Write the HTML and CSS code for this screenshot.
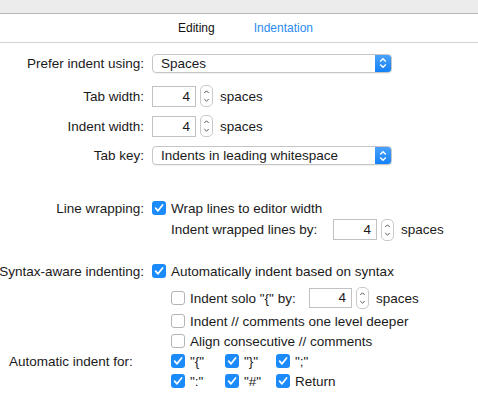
FILE: index.html
```html
<!DOCTYPE html>
<html>
<head>
<meta charset="utf-8">
<link rel="stylesheet" href="styles.css">
</head>
<body>
<div class="titlebar"></div>
<div class="tabs">
  <span class="tab">Editing</span>
  <span class="tab active">Indentation</span>
</div>
<div class="form">
  <div class="row r-prefer">
    <div class="label">Prefer indent using:</div>
    <div class="popup w240"><span class="popup-text">Spaces</span><span class="popup-arrow"><svg width="8" height="12" viewBox="0 0 8 12"><path d="M1.2 4.6 L4 1.8 L6.8 4.6 M1.2 7.4 L4 10.2 L6.8 7.4" fill="none" stroke="#fff" stroke-width="1.4"/></svg></span></div>
  </div>
  <div class="row r-tabw">
    <div class="label">Tab width:</div>
    <div class="num">4</div>
    <div class="stepper"><svg width="13" height="22" viewBox="0 0 13 22"><path d="M4.3 8 L6.5 5.8 L8.7 8 M4.3 14 L6.5 16.2 L8.7 14" fill="none" stroke="#555" stroke-width="1"/></svg></div>
    <span class="unit">spaces</span>
  </div>
  <div class="row r-indw">
    <div class="label">Indent width:</div>
    <div class="num">4</div>
    <div class="stepper"><svg width="13" height="22" viewBox="0 0 13 22"><path d="M4.3 8 L6.5 5.8 L8.7 8 M4.3 14 L6.5 16.2 L8.7 14" fill="none" stroke="#555" stroke-width="1"/></svg></div>
    <span class="unit">spaces</span>
  </div>
  <div class="row r-tabkey">
    <div class="label">Tab key:</div>
    <div class="popup w240"><span class="popup-text">Indents in leading whitespace</span><span class="popup-arrow"><svg width="8" height="12" viewBox="0 0 8 12"><path d="M1.2 4.6 L4 1.8 L6.8 4.6 M1.2 7.4 L4 10.2 L6.8 7.4" fill="none" stroke="#fff" stroke-width="1.4"/></svg></span></div>
  </div>

  <div class="row r-wrap">
    <div class="label">Line wrapping:</div>
    <span class="cb on"><svg width="14" height="14" viewBox="0 0 14 14"><path d="M3.6 7.2 L6 9.8 L10.6 3.9" fill="none" stroke="#fff" stroke-width="1.7" stroke-linecap="round" stroke-linejoin="round"/></svg></span>
    <span class="cbtext">Wrap lines to editor width</span>
  </div>
  <div class="row r-wrapby">
    <div class="label"></div>
    <span class="sub">Indent wrapped lines by:</span>
    <div class="num">4</div>
    <div class="stepper"><svg width="13" height="22" viewBox="0 0 13 22"><path d="M4.3 8 L6.5 5.8 L8.7 8 M4.3 14 L6.5 16.2 L8.7 14" fill="none" stroke="#555" stroke-width="1"/></svg></div>
    <span class="unit">spaces</span>
  </div>

  <div class="row r-syntax">
    <div class="label">Syntax-aware indenting:</div>
    <span class="cb on"><svg width="14" height="14" viewBox="0 0 14 14"><path d="M3.6 7.2 L6 9.8 L10.6 3.9" fill="none" stroke="#fff" stroke-width="1.7" stroke-linecap="round" stroke-linejoin="round"/></svg></span>
    <span class="cbtext">Automatically indent based on syntax</span>
  </div>
  <div class="row r-solo">
    <div class="label"></div>
    <div class="inset">
      <span class="cb"></span>
      <span class="cbtext solo">Indent solo "{" by:</span>
      <div class="num small">4</div>
      <div class="stepper"><svg width="13" height="22" viewBox="0 0 13 22"><path d="M4.3 8 L6.5 5.8 L8.7 8 M4.3 14 L6.5 16.2 L8.7 14" fill="none" stroke="#555" stroke-width="1"/></svg></div>
      <span class="unit">spaces</span>
    </div>
  </div>
  <div class="row r-comm">
    <div class="label"></div>
    <div class="inset">
      <span class="cb"></span>
      <span class="cbtext">Indent // comments one level deeper</span>
    </div>
  </div>
  <div class="row r-align">
    <div class="label"></div>
    <div class="inset">
      <span class="cb"></span>
      <span class="cbtext">Align consecutive // comments</span>
    </div>
  </div>
  <div class="row r-auto">
    <div class="label left">Automatic indent for:</div>
    <div class="inset grid3">
      <span class="item"><span class="cb on"><svg width="14" height="14" viewBox="0 0 14 14"><path d="M3.6 7.2 L6 9.8 L10.6 3.9" fill="none" stroke="#fff" stroke-width="1.7" stroke-linecap="round" stroke-linejoin="round"/></svg></span><span class="cbtext">"{"</span></span>
      <span class="item"><span class="cb on"><svg width="14" height="14" viewBox="0 0 14 14"><path d="M3.6 7.2 L6 9.8 L10.6 3.9" fill="none" stroke="#fff" stroke-width="1.7" stroke-linecap="round" stroke-linejoin="round"/></svg></span><span class="cbtext">"}"</span></span>
      <span class="item"><span class="cb on"><svg width="14" height="14" viewBox="0 0 14 14"><path d="M3.6 7.2 L6 9.8 L10.6 3.9" fill="none" stroke="#fff" stroke-width="1.7" stroke-linecap="round" stroke-linejoin="round"/></svg></span><span class="cbtext">";"</span></span>
    </div>
  </div>
  <div class="row r-auto2">
    <div class="label"></div>
    <div class="inset grid3">
      <span class="item"><span class="cb on"><svg width="14" height="14" viewBox="0 0 14 14"><path d="M3.6 7.2 L6 9.8 L10.6 3.9" fill="none" stroke="#fff" stroke-width="1.7" stroke-linecap="round" stroke-linejoin="round"/></svg></span><span class="cbtext">":"</span></span>
      <span class="item"><span class="cb on"><svg width="14" height="14" viewBox="0 0 14 14"><path d="M3.6 7.2 L6 9.8 L10.6 3.9" fill="none" stroke="#fff" stroke-width="1.7" stroke-linecap="round" stroke-linejoin="round"/></svg></span><span class="cbtext">"#"</span></span>
      <span class="item"><span class="cb on"><svg width="14" height="14" viewBox="0 0 14 14"><path d="M3.6 7.2 L6 9.8 L10.6 3.9" fill="none" stroke="#fff" stroke-width="1.7" stroke-linecap="round" stroke-linejoin="round"/></svg></span><span class="cbtext">Return</span></span>
    </div>
  </div>
</div>
</body>
</html>
```
FILE: styles.css
```css
html, body {
  margin: 0;
  padding: 0;
  background: #fff;
}
body {
  width: 478px;
  height: 406px;
  overflow: hidden;
  font-family: "Liberation Sans", Arial, sans-serif;
  font-size: 13.5px;
  color: #1a1a1a;
}
.titlebar {
  height: 13px;
  background: #ececec;
  border-bottom: 1px solid #b6b6b6;
}
.tabs {
  height: 28px;
  border-bottom: 1px solid #d2d2d2;
  display: flex;
  align-items: center;
  justify-content: center;
  gap: 39px;
  padding-left: 13px;
  font-size: 12px;
}
.tab { color: #111; }
.tab.active { color: #2b8cf0; }

.form {
  padding-top: 10px;
  display: flex;
  flex-direction: column;
}
.row {
  height: 20px;
  display: flex;
  align-items: center;
}
.label {
  width: 144px;
  flex: none;
  display: flex;
  justify-content: flex-end;
  margin-right: 8px;
  white-space: nowrap;
}
.label.left {
  justify-content: flex-start;
  padding-left: 9px;
  box-sizing: border-box;
}
.r-tabw { margin-top: 13px; }
.r-indw { margin-top: 10px; }
.r-tabkey { margin-top: 9px; height: 21px; }
.r-wrap { margin-top: 32px; }
.r-wrapby { margin-top: 1px; height: 21px; }
.r-syntax { margin-top: 21px; }
.r-solo { margin-top: 7px; }
.r-comm { margin-top: 3px; }
.r-align { margin-top: 0; }
.r-auto { margin-top: 0; }
.r-auto2 { margin-top: 0; }

.popup {
  height: 19px;
  box-sizing: border-box;
  border: 1px solid #c6c6c6;
  border-radius: 4px;
  display: flex;
  align-items: center;
  box-shadow: 0 1px 1px rgba(0,0,0,0.06);
  overflow: hidden;
}
.popup.w240 { width: 240px; }
.popup-text {
  flex: 1;
  padding-left: 8px;
}
.popup-arrow {
  width: 16px;
  height: 100%;
  background: linear-gradient(#4aa2fd, #1482f8);
  display: flex;
  align-items: center;
  justify-content: center;
}
.num {
  width: 44px;
  height: 21px;
  box-sizing: border-box;
  border: 1px solid #c2c2c2;
  text-align: right;
  padding-right: 5px;
  line-height: 19px;
  flex: none;
}
.num.small { width: 43px; height: 20px; line-height: 18px; }
.stepper {
  width: 13px;
  height: 22px;
  box-sizing: border-box;
  border: 1px solid #cacaca;
  border-radius: 5px;
  margin-left: 4px;
  display: flex;
  align-items: center;
  justify-content: center;
  flex: none;
}
.stepper svg { display: block; margin: -1px; }
.unit { margin-left: 7px; }
.cb {
  width: 14px;
  height: 14px;
  box-sizing: border-box;
  border: 1px solid #b4b4b4;
  border-radius: 3px;
  background: #fff;
  flex: none;
  display: inline-flex;
}
.cb.on {
  border: none;
  background: #1b8bfb;
}
.cb svg { display: block; }
.cbtext { margin-left: 5px; white-space: nowrap; }
.sub {
  margin-left: 19px;
  width: 162px;
  flex: none;
  white-space: nowrap;
}
.inset {
  margin-left: 19px;
  display: flex;
  align-items: center;
}
.solo { width: 119px; flex: none; }
.grid3 {
  display: grid;
  grid-template-columns: 54px 51px auto;
}
.item {
  display: flex;
  align-items: center;
}
```
